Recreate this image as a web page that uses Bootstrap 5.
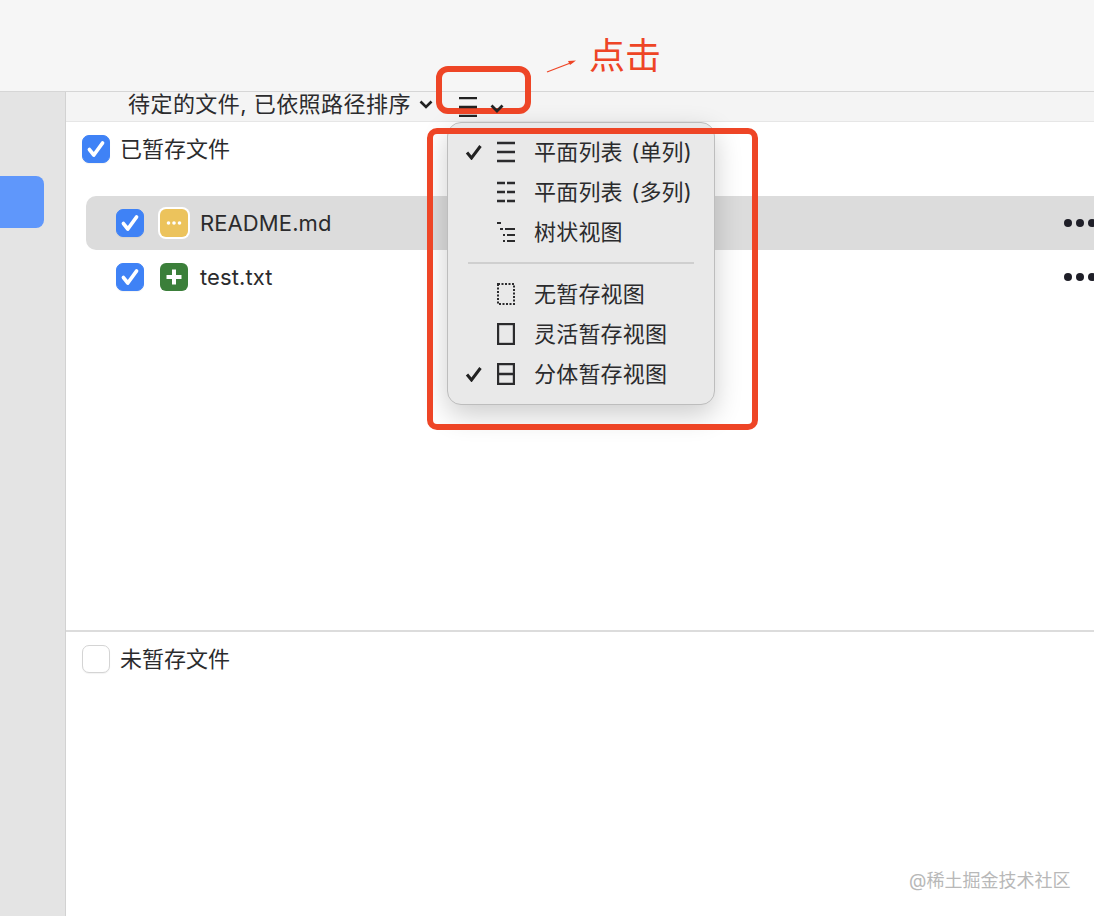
<!DOCTYPE html>
<html lang="zh">
<head>
    <meta charset="UTF-8">
    <meta name="viewport" content="width=device-width, initial-scale=1.0">
    <title>暂存视图</title>
    <link href="https://cdn.jsdelivr.net/npm/bootstrap@5.3.0/dist/css/bootstrap.min.css" rel="stylesheet">
    <style>
        html, body {
            height: 916px;
            overflow: hidden;
        }
        body {
            background: #fff;
            color: #2b2b2d;
            font-family: Inter, "Noto Sans CJK SC", sans-serif;
            font-size: 22px;
            line-height: 28px;
            position: relative;
        }
        .top-bar {
            height: 92px;
            background: #f6f6f6;
            border-bottom: 1px solid #d6d6d6;
        }
        .app-body {
            height: 824px;
        }
        .side-bar {
            width: 66px;
            background: #e4e4e4;
            border-right: 1px solid #d2d2d2;
            padding-top: 84px;
        }
        .side-active {
            width: 44px;
            height: 52px;
            background: #5f97fb;
            border-radius: 0 8px 8px 0;
        }
        .sub-bar {
            height: 30px;
            background: #f4f4f4;
            border-bottom: 1px solid #e6e6e6;
            padding-left: 62px;
            line-height: 24px;
        }
        .sub-title {
            width: 291px;
            margin-bottom: 6px;
            letter-spacing: .45px;
        }
        .sub-chevron {
            width: 14px;
            height: 9px;
            margin-bottom: 4px;
        }
        .list-button {
            position: relative;
            z-index: 4;
            width: 46px;
            height: 20px;
            margin-left: 26px;
            flex: none;
        }
        .stage-pane {
            height: 508px;
            padding-top: 13px;
        }
        .pane-title {
            padding-left: 16px;
            height: 28px;
            gap: 10px;
        }
        .unstage-pane {
            border-top: 2px solid #dcdcdc;
            padding-top: 13px;
        }
        .form-check-input.tick-box {
            width: 28px;
            height: 28px;
            margin: 0;
            flex: none;
            border: 1px solid #d4d4d4;
            border-radius: 7px;
            box-shadow: 0 1px 1px rgba(0, 0, 0, .05);
        }
        .form-check-input.tick-box:checked {
            border-color: #3f82f6;
            background-color: #3f82f6;
            background-size: 24px 24px;
            background-image: url("data:image/svg+xml,%3csvg xmlns='http://www.w3.org/2000/svg' viewBox='0 0 22 22'%3e%3cpath fill='none' stroke='%23fff' stroke-width='3.4' stroke-linecap='round' stroke-linejoin='round' d='M5 11.500l4 5 8-11'/%3e%3c/svg%3e");
        }
        .file-list {
            margin-top: 33px;
            margin-left: 20px;
        }
        .file-row {
            height: 54px;
            padding-left: 30px;
            border-radius: 10px 0 0 10px;
        }
        .file-row.is-current {
            background: #dcdcdc;
        }
        .file-name {
            margin-left: 12px;
            letter-spacing: .1px;
        }
        .file-icon {
            width: 28px;
            height: 28px;
            margin-left: 16px;
            border-radius: 6px;
            flex: none;
        }
        .icon-changed {
            background: #ecc35c;
            box-shadow: 0 0 0 2px #fff;
        }
        .icon-added {
            background: #3b7f3a;
        }
        .more-dots {
            width: 30px;
            height: 8px;
            flex: none;
        }
        .view-menu.dropdown-menu {
            position: absolute;
            left: 447px;
            top: 122px;
            width: 268px;
            height: 282.500px;
            padding: 9px 0 0;
            margin: 0;
            background: #e9e9e9;
            border: 1px solid #bdbdbd;
            border-radius: 14px;
            box-shadow: 0 10px 28px rgba(0, 0, 0, .2);
            font-size: 22px;
            z-index: 2;
        }
        .view-menu .dropdown-item {
            height: 40px;
            padding: 0 0 0 17px;
            color: #2b2b2d;
            line-height: 40px;
            letter-spacing: .2px;
            word-spacing: 2px;
        }
        .view-menu .dropdown-divider {
            margin: 10px 20px 10px;
            border-top: 2px solid #cfcfcf;
            opacity: 1;
        }
        .tick-slot {
            width: 32px;
            flex: none;
        }
        .menu-icon {
            width: 18px;
            height: 22px;
            margin-right: 19px;
            flex: none;
        }
        .mark-box {
            position: absolute;
            border: 6px solid #ee4526;
            z-index: 3;
        }
        .mark-button {
            left: 436px;
            top: 66px;
            width: 95px;
            height: 48px;
            border-radius: 12px;
        }
        .mark-menu {
            left: 427px;
            top: 128px;
            width: 331px;
            height: 302px;
            border-radius: 10px;
        }
        .mark-arrow {
            position: absolute;
            left: 545px;
            top: 56px;
            width: 34px;
            height: 18px;
            z-index: 3;
        }
        .mark-label {
            position: absolute;
            left: 589px;
            top: 32px;
            font-size: 36px;
            line-height: 48px;
            color: #ee4526;
            z-index: 3;
        }
        .water-mark {
            position: absolute;
            left: 909px;
            top: 869px;
            font-size: 18px;
            line-height: 24px;
            color: #b8b8b8;
        }
    </style>
</head>
<body>

    <div class="top-bar"></div>

    <div class="app-body d-flex">
        <div class="side-bar flex-shrink-0">
            <div class="side-active"></div>
        </div>

        <div class="flex-grow-1 overflow-hidden">
            <div class="sub-bar d-flex align-items-center">
                <span class="sub-title text-nowrap">待定的文件, 已依照路径排序</span>
                <svg class="sub-chevron" viewBox="0 0 14 9"><path d="M1.500 1.500L7 7l5.500-5.500" fill="none" stroke="#222" stroke-width="2.600"/></svg>
                <svg class="list-button" viewBox="0 0 46 20">
                    <path d="M0 1h18M0 10h18M0 19h18" stroke="#222" stroke-width="2.400" fill="none"/>
                    <path d="M32.500 8.500L38 14l5.500-5.500" stroke="#222" stroke-width="2.800" fill="none"/>
                </svg>
            </div>

            <div class="stage-pane">
                <div class="pane-title d-flex align-items-center">
                    <input class="form-check-input tick-box" type="checkbox" checked>
                    <span>已暂存文件</span>
                </div>
                <div class="file-list">
                    <div class="file-row is-current d-flex align-items-center">
                        <input class="form-check-input tick-box" type="checkbox" checked>
                        <svg class="file-icon icon-changed" viewBox="0 0 28 28"><g fill="#fff"><circle cx="8.500" cy="14" r="1.800"/><circle cx="14" cy="14" r="1.800"/><circle cx="19.500" cy="14" r="1.800"/></g></svg>
                        <span class="file-name">README.md</span>
                        <svg class="more-dots ms-auto" viewBox="0 0 30 8"><g fill="#1f1f28"><circle cx="4" cy="4" r="4"/><circle cx="16" cy="4" r="4"/><circle cx="28" cy="4" r="4"/></g></svg>
                    </div>
                    <div class="file-row d-flex align-items-center">
                        <input class="form-check-input tick-box" type="checkbox" checked>
                        <svg class="file-icon icon-added" viewBox="0 0 28 28"><path d="M14 6.500v15M6.500 14h15" stroke="#fff" stroke-width="4" fill="none"/></svg>
                        <span class="file-name">test.txt</span>
                        <svg class="more-dots ms-auto" viewBox="0 0 30 8"><g fill="#1f1f28"><circle cx="4" cy="4" r="4"/><circle cx="16" cy="4" r="4"/><circle cx="28" cy="4" r="4"/></g></svg>
                    </div>
                </div>
            </div>

            <div class="unstage-pane">
                <div class="pane-title d-flex align-items-center">
                    <input class="form-check-input tick-box" type="checkbox">
                    <span>未暂存文件</span>
                </div>
            </div>
        </div>
    </div>

    <ul class="view-menu dropdown-menu show list-unstyled">
        <li><a class="dropdown-item d-flex align-items-center" href="#">
            <span class="tick-slot d-flex"><svg width="18" height="16" viewBox="0 0 18 16"><path d="M2 8.500l4.500 5.500L15.500 2" fill="none" stroke="#222" stroke-width="3"/></svg></span>
            <svg class="menu-icon" viewBox="0 0 18 22"><path d="M0 2h18M0 11h18M0 20h18" stroke="#2b2b2d" stroke-width="2.400" fill="none"/></svg>
            <span>平面列表 (单列)</span>
        </a></li>
        <li><a class="dropdown-item d-flex align-items-center" href="#">
            <span class="tick-slot"></span>
            <svg class="menu-icon" viewBox="0 0 18 22"><path d="M0 2h8M10 2h8M0 11h8M10 11h8M0 20h8M10 20h8" stroke="#2b2b2d" stroke-width="2.400" fill="none"/></svg>
            <span>平面列表 (多列)</span>
        </a></li>
        <li><a class="dropdown-item d-flex align-items-center" href="#">
            <span class="tick-slot"></span>
            <svg class="menu-icon" viewBox="0 0 18 22"><path d="M0 2h4M3 8h3M8 8h10M6 14h2M10 14h8M6 20h2M10 20h8" stroke="#2b2b2d" stroke-width="2" fill="none"/></svg>
            <span>树状视图</span>
        </a></li>
        <li><hr class="dropdown-divider"></li>
        <li><a class="dropdown-item d-flex align-items-center" href="#">
            <span class="tick-slot"></span>
            <svg class="menu-icon" viewBox="0 0 18 22"><rect x="1" y="1" width="16" height="20" fill="none" stroke="#2b2b2d" stroke-width="2" stroke-dasharray="2 1.500"/></svg>
            <span>无暂存视图</span>
        </a></li>
        <li><a class="dropdown-item d-flex align-items-center" href="#">
            <span class="tick-slot"></span>
            <svg class="menu-icon" viewBox="0 0 18 22"><rect x="1" y="1" width="16" height="20" fill="none" stroke="#2b2b2d" stroke-width="2.400"/></svg>
            <span>灵活暂存视图</span>
        </a></li>
        <li><a class="dropdown-item d-flex align-items-center" href="#">
            <span class="tick-slot d-flex"><svg width="18" height="16" viewBox="0 0 18 16"><path d="M2 8.500l4.500 5.500L15.500 2" fill="none" stroke="#222" stroke-width="3"/></svg></span>
            <svg class="menu-icon" viewBox="0 0 18 22"><path d="M1 1h16v20H1zM1 11h16" fill="none" stroke="#2b2b2d" stroke-width="2.400"/></svg>
            <span>分体暂存视图</span>
        </a></li>
    </ul>

    <div class="mark-box mark-button"></div>
    <div class="mark-box mark-menu"></div>
    <svg class="mark-arrow" viewBox="0 0 34 18"><path d="M2 16L28 6" stroke="#ee4526" stroke-width="1.300" fill="none"/><path d="M31 4.500l-8 .5 2 4z" fill="#ee4526"/></svg>
    <div class="mark-label">点击</div>

    <div class="water-mark">@稀土掘金技术社区</div>

    <script src="https://cdn.jsdelivr.net/npm/bootstrap@5.3.0/dist/js/bootstrap.bundle.min.js"></script>
</body>
</html>
